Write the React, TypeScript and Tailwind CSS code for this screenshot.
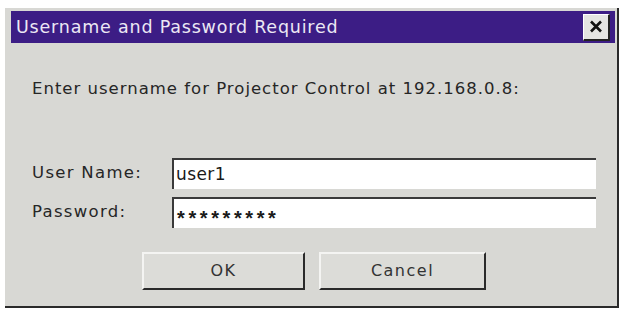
import React from 'react';

export default function App() {
  return (
    <div className="w-[623px] h-[312px] bg-white pl-[5px] pt-[8px] overflow-hidden" style={{ fontFamily: '"DejaVu Sans", Verdana, sans-serif' }}>
      <div className="w-[614px] h-[300px] bg-[#d8d8d4] border-r-2 border-b-2 border-[#2a2a2a] pl-[6px] pt-[3px] pr-[2px] flex flex-col">
        {/* Title bar */}
        <div className="h-[32px] bg-[#3c1d85] flex items-center justify-between pl-[5px] pr-[5px]">
          <span className="text-[17.5px] text-[#ece8f4] tracking-[0.8px]">Username and Password Required</span>
          <button className="w-[27px] h-[27px] bg-[#e4e4e2] border-t border-l border-white border-r-2 border-b-2 border-r-[#222] border-b-[#222] flex items-center justify-center">
            <svg width="14" height="13" viewBox="0 0 14 13">
              <path d="M2 1.5 L12 11.5 M12 1.5 L2 11.5" stroke="#111" strokeWidth="2.6" />
            </svg>
          </button>
        </div>

        {/* Body */}
        <div className="pl-[21px] pr-[19px] pt-[35px] text-[#262626]">
          <p className="text-[16.5px] leading-[22px] tracking-[1px]">Enter username for Projector Control at 192.168.0.8:</p>

          <div className="mt-[58px] flex flex-col gap-[8px]">
            <div className="flex items-center">
              <label className="w-[140px] text-[16.5px] tracking-[1.3px]">User Name:</label>
              <div className="flex-1 h-[31px] bg-white border-t-2 border-l-2 border-[#3a3a3a] flex items-center pl-[2px] text-[17px] tracking-[0.4px] text-[#1a1a1a]">
                user1
              </div>
            </div>
            <div className="flex items-center">
              <label className="w-[140px] text-[16.5px] tracking-[1.3px]">Password:</label>
              <div className="flex-1 h-[31px] bg-white border-t-2 border-l-2 border-[#3a3a3a] flex items-center pl-[3px] text-[#1a1a1a]">
                <span className="text-[20px] font-bold tracking-[3.6px] translate-y-[4px]" style={{ fontFamily: '"Liberation Sans", Arial, sans-serif' }}>*********</span>
              </div>
            </div>
          </div>

          <div className="mt-[24px] flex gap-[14px] pl-[110px]">
            <button className="w-[163px] h-[38px] bg-[#dcdcd8] border-t-2 border-l-2 border-[#f4f4f2] border-r-2 border-b-2 border-r-[#2a2a2a] border-b-[#2a2a2a] text-[16px] tracking-[1.5px] text-[#333]">
              OK
            </button>
            <button className="w-[167px] h-[38px] bg-[#dcdcd8] border-t-2 border-l-2 border-[#f4f4f2] border-r-2 border-b-2 border-r-[#2a2a2a] border-b-[#2a2a2a] text-[16px] tracking-[1.5px] text-[#333]">
              Cancel
            </button>
          </div>
        </div>
      </div>
    </div>
  );
}
